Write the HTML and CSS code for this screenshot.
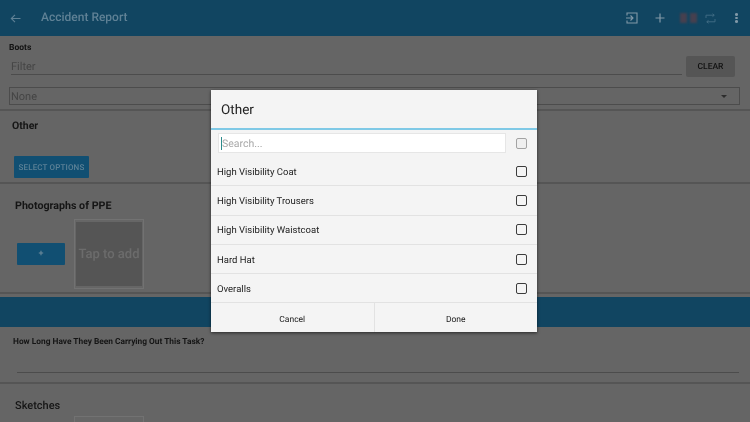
FILE: index.html
```html
<!DOCTYPE html>
<html lang="en">
<head>
<meta charset="utf-8">
<title>Accident Report</title>
<link rel="stylesheet" href="styles.css">
</head>
<body>
<div class="app">
  <header class="topbar">
    <svg class="back" width="11" height="11" viewBox="0 0 11 11"><path d="M10.500 5.500H1.500M5 1.800L1.300 5.500 5 9.200" fill="none" stroke="#5f8195" stroke-width="1.100"/></svg>
    <div class="title">Accident Report</div>
    <svg class="ic-enter" width="12" height="12" viewBox="0 0 12 12"><path d="M1 3.500V1h10v10H1V8.500M0 6h7M4.500 3.500L7 6 4.500 8.500" fill="none" stroke="#8299a8" stroke-width="1.100"/></svg>
    <svg class="ic-plus" width="10" height="10" viewBox="0 0 10 10"><path d="M5 .5v9M.5 5h9" stroke="#8299a8" stroke-width="1.200"/></svg>
    <div class="ic-red"><i></i><i></i></div>
    <svg class="ic-sync" width="11" height="11" viewBox="0 0 11 11"><path d="M1 5V2.200h8M7.500.8L9.300 2.200 7.500 3.600M10 6v2.800H2M3.500 10.200L1.700 8.800 3.500 7.400" fill="none" stroke="#3f6b83" stroke-width="1"/></svg>
    <div class="ic-dots"><i></i><i></i><i></i></div>
  </header>

  <section class="boots">
    <div class="label">Boots</div>
    <div class="filter-row">
      <div class="filter">Filter</div>
      <div class="clear">CLEAR</div>
    </div>
    <div class="select">None<span class="caret"></span></div>
  </section>

  <section class="other">
    <div class="heading">Other</div>
    <div class="select-btn">SELECT OPTIONS</div>
  </section>

  <section class="photos">
    <div class="heading heading-lg">Photographs of PPE</div>
    <div class="photo-row">
      <div class="add-btn">+</div>
      <div class="tile"><div class="tile-inner">Tap to add</div></div>
    </div>
  </section>

  <div class="band"></div>

  <section class="question">
    <div class="q-label">How Long Have They Been Carrying Out This Task?</div>
    <div class="q-line"></div>
  </section>

  <section class="sketches">
    <div class="sk-title">Sketches</div>
    <div class="tile sk-tile"></div>
  </section>

  <div class="dialog">
    <div class="d-title">Other</div>
    <div class="d-search">
      <div class="d-input"><span class="cursor"></span>Search...</div>
      <span class="box box-light"></span>
    </div>
    <div class="d-row"><span class="d-text">High Visibility Coat</span><span class="box"></span></div>
    <div class="d-row"><span class="d-text">High Visibility Trousers</span><span class="box"></span></div>
    <div class="d-row"><span class="d-text">High Visibility Waistcoat</span><span class="box"></span></div>
    <div class="d-row"><span class="d-text">Hard Hat</span><span class="box"></span></div>
    <div class="d-row"><span class="d-text">Overalls</span><span class="box"></span></div>
    <div class="d-foot">
      <div class="d-btn">Cancel</div>
      <div class="d-btn">Done</div>
    </div>
  </div>
</div>
</body>
</html>
```

FILE: styles.css
```css
* { box-sizing: border-box; }
html, body { margin: 0; padding: 0; }
body { width: 750px; height: 422px; overflow: hidden; font-family: Roboto, "Liberation Sans", sans-serif; text-rendering: geometricPrecision; }
.app { position: relative; width: 750px; height: 422px; overflow: hidden; background: #656565; color: #111; filter: blur(.3px); }

.topbar { height: 36px; background: #114561; display: flex; align-items: center; }
.back { margin-left: 10px; }
.title { margin-left: 20px; font-size: 12px; line-height: 14px; padding-bottom: 2px; font-weight: 500; color: #5f8195; flex: 1; }
.ic-enter { margin-right: 17px; }
.ic-plus { margin-right: 15px; }
.ic-red { width: 17px; height: 10px; display: flex; justify-content: space-between; margin-right: 8px; }
.ic-red i { width: 7px; height: 10px; background: #46404f; display: block; filter: blur(.8px); }
.ic-sync { margin-right: 19px; }
.ic-dots { display: flex; flex-direction: column; gap: 1px; margin-right: 12px; }
.ic-dots i { width: 3px; height: 2.500px; border-radius: 50%; background: #8299a8; display: block; }

.boots { height: 75px; padding: 7px 10px 0 9px; border-bottom: 2px solid #555; }
.label { font-size: 8.500px; font-weight: 700; line-height: 11px; color: #111; }
.filter-row { display: flex; align-items: flex-start; }
.filter { margin: 3px 0 0 2px; width: 671px; height: 18px; border-bottom: 1px solid #4c4c4c; font-size: 11px; line-height: 20px; color: #454545; }
.clear { margin: 2px 0 0 4px; width: 49px; height: 21px; background: #555; border-radius: 2px; font-size: 8.500px; font-weight: 500; line-height: 23px; text-align: center; color: #111; }
.select { position: relative; margin-top: 9.500px; width: 731px; height: 18px; border: 1px solid #4c4c4c; font-size: 11px; line-height: 18px; padding-left: 1px; color: #454545; }
.caret { position: absolute; right: 12px; top: 7px; border: 3px solid transparent; border-top: 3px solid #2c2c2c; }

.other { height: 73px; padding: 8px 12px 0; border-bottom: 2px solid #555; }
.heading { font-size: 10.500px; font-weight: 700; line-height: 13px; color: #151515; }
.select-btn { margin: 24px 0 0 2px; width: 75px; height: 22px; background: #114f72; border-radius: 1px; font-size: 8px; font-weight: 500; line-height: 24px; text-align: center; color: #5c8196; letter-spacing: .15px; }

.photos { height: 110px; padding: 14px 15px 0; border-bottom: 2px solid #555; }
.heading-lg { font-size: 10.700px; line-height: 15px; }
.photo-row { display: flex; align-items: center; margin-top: 6px; padding-left: 2px; }
.add-btn { width: 48px; height: 22px; background: #114f72; border-radius: 1px; color: #6d8a9b; font-size: 9px; font-weight: 500; line-height: 22px; text-align: center; }
.tile { margin-left: 9px; width: 70px; height: 70px; padding: 2px 1px; background: #666; border: 1px solid #727272; }
.tile-inner { height: 100%; background: #555; color: #6c6c6c; font-size: 13px; font-weight: 500; line-height: 65px; text-align: center; white-space: nowrap; }

.band { height: 30px; margin-top: 3px; background: #114561; }

.question { height: 57px; padding: 10px 13px 0; border-bottom: 2px solid #555; }
.q-label { font-size: 8.350px; font-weight: 700; line-height: 11px; color: #151515; white-space: nowrap; }
.q-line { margin: 24px 0 0 4px; width: 722px; height: 1px; background: #4c4c4c; }

.sketches { padding: 15px 15px 0; }
.sk-title { font-size: 11px; font-weight: 500; line-height: 14px; color: #151515; }
.sk-tile { margin: 3px 0 0 59px; height: 30px; }

.dialog { position: absolute; left: 211px; top: 90px; width: 326px; height: 242px; background: #f4f4f4; box-shadow: 0 1px 3px rgba(0,0,0,.6); display: flex; flex-direction: column; color: #2a2a2a; }
.d-title { height: 40px; flex: none; padding-left: 10px; font-size: 13.500px; line-height: 41px; color: #222; border-bottom: 2px solid #7fc9e6; }
.d-search { height: 27px; flex: none; display: flex; align-items: flex-start; justify-content: space-between; padding: 3px 10px 0 7px; }
.d-search .box { margin-top: 5px; }
.d-input { position: relative; width: 288px; height: 20px; background: #fff; border: 1px solid #e6e6e6; padding-left: 3px; font-size: 10.500px; line-height: 19px; color: #a8a8a8; }
.cursor { position: absolute; left: 2px; top: 3px; width: 1px; height: 13px; background: #2b8b8b; }
.box { width: 11px; height: 11px; border: 1.500px solid #3c3c3c; border-radius: 2px; flex: none; }
.box-light { border-color: #a3a3a3; background: #efefef; }
.d-row { height: 29.300px; flex: none; display: flex; align-items: center; justify-content: space-between; padding: 0 10px 0 6px; font-size: 9.500px; border-bottom: 1px solid #e2e2e2; color: #222; }
.d-text { padding-top: 2px; }
.d-foot { height: 28.500px; flex: none; display: flex; }
.d-btn { flex: 1; text-align: center; font-size: 8.500px; line-height: 24px; padding-top: 4.300px; color: #222; }
.d-btn + .d-btn { border-left: 1px solid #e2e2e2; }
```
